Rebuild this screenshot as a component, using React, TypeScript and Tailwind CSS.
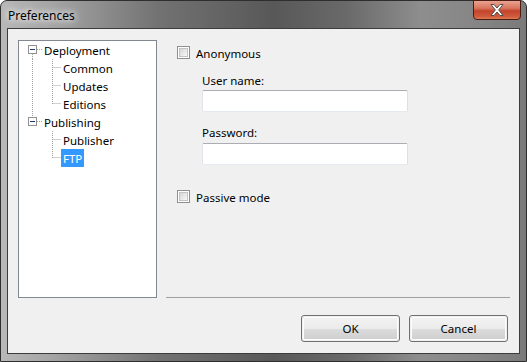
import React from 'react';

type Seg = { x1: number; y1: number; x2: number; y2: number };

const ROOT_X = 13.5;
const CHILD_X = 33.5;

// dotted tree connectors, one svg per row
const Lines = ({ segs, box, width }: { segs: Seg[]; box?: boolean; width: number }) => (
  <svg width={width} height={18} className="shrink-0">
    {segs.map((s, i) => (
      <line
        key={i}
        x1={s.x1}
        y1={s.y1}
        x2={s.x2}
        y2={s.y2}
        stroke="#a0a0a0"
        strokeWidth={1}
        strokeDasharray="1 1"
      />
    ))}
    {box && (
      <g>
        <rect x={9.5} y={4.5} width={8} height={8} fill="#fff" stroke="#919191" />
        <line x1={11} y1={8.5} x2={16} y2={8.5} stroke="#1f3a7a" />
      </g>
    )}
  </svg>
);

const TreeRow = ({
  label,
  segs,
  box,
  child,
  selected,
}: {
  label: string;
  segs: Seg[];
  box?: boolean;
  child?: boolean;
  selected?: boolean;
}) => (
  <div className="flex h-[18px] items-center">
    <Lines segs={segs} box={box} width={child ? 42 : 23} />
    <span
      className={
        'px-[2px] pt-[1px] leading-[17px] ' + (selected ? 'bg-[#3399ff] text-white' : 'text-black')
      }
    >
      {label}
    </span>
  </div>
);

const rootFull: Seg = { x1: ROOT_X, y1: 0, x2: ROOT_X, y2: 18 };
const childFull: Seg = { x1: CHILD_X, y1: 0, x2: CHILD_X, y2: 18 };
const childHalf: Seg = { x1: CHILD_X, y1: 0, x2: CHILD_X, y2: 9 };
const childTick: Seg = { x1: CHILD_X, y1: 8.5, x2: 42, y2: 8.5 };
const rootTick: Seg = { x1: 18, y1: 8.5, x2: 23, y2: 8.5 };

const Checkbox = ({ label }: { label: string }) => (
  <div className="flex h-[13px] items-center">
    <div className="h-[13px] w-[13px] shrink-0 border border-[#8e8f8f] bg-white p-[1px]">
      <div className="h-full w-full border border-[#c3c3c3] bg-gradient-to-br from-[#d6d6d6] to-[#f8f8f8]" />
    </div>
    <span className="ml-[6px] pt-[2px] leading-[16px] text-black">{label}</span>
  </div>
);

const TextBox = () => (
  <div className="h-[22px] w-[206px] rounded-[2px] border border-[#abadb3] border-b-[#e3e9ef] border-l-[#e2e3ea] border-r-[#dbdfe6] bg-white" />
);

const Button = ({ label }: { label: string }) => (
  <div className="h-[27px] w-[99px] rounded-[3px] border border-[#707070] p-[1px]">
    <div className="flex h-full w-full items-center justify-center rounded-[2px] border border-[#fcfcfc] bg-[linear-gradient(to_bottom,#f2f2f2_0%,#ebebeb_50%,#dddddd_51%,#cfcfcf_100%)] text-black">
      {label}
    </div>
  </div>
);

export default function App() {
  return (
    <div className="h-[362px] w-[527px] bg-white font-['Segoe_UI','Noto_Sans',sans-serif] text-[11.5px]">
      <div className="flex h-full w-full flex-col rounded-t-[7px] border border-[#2e2e2e] bg-[linear-gradient(to_right,#b8b8b8_0%,#a4a4a4_10%,#727272_30%,#585858_52%,#6a6a6a_66%,#8e8e8e_80%,#868686_90%,#7a7a7a_100%)] px-[6px] pb-[7px]">
        <div className="relative flex h-[27px] items-center pl-[1px] pt-[2px]">
          <span className="text-[12px] text-black [text-shadow:0_0_6px_#fff,0_0_10px_#fff]">
            Preferences
          </span>
          <div className="absolute right-[-1px] top-[-1px] flex h-[20px] w-[48px] items-center justify-center rounded-b-[4px] border border-[#4a1c14] bg-[linear-gradient(to_bottom,#e8a390_0%,#d8755e_40%,#c4442b_55%,#cf5a3c_85%,#e07a55_100%)]">
            <svg width="16" height="14" viewBox="0 0 16 14">
              <path
                d="M2 1.5 L5 1.5 L8 5 L11 1.5 L14 1.5 L9.7 7 L14 12.5 L11 12.5 L8 9 L5 12.5 L2 12.5 L6.3 7 Z"
                fill="#fff"
                stroke="#4e4e4e"
                strokeWidth="1"
                strokeLinejoin="round"
              />
            </svg>
          </div>
        </div>

        <div className="flex flex-1 flex-col border border-[#3c3c3c] bg-[#f0f0f0]">
          <div className="flex flex-1 pl-[10px] pt-[11px]">
            <div className="h-[258px] w-[139px] border border-[#828790] bg-white">
              <TreeRow
                label="Deployment"
                box
                segs={[{ x1: ROOT_X, y1: 13, x2: ROOT_X, y2: 18 }, rootTick]}
              />
              <TreeRow label="Common" child segs={[rootFull, childFull, childTick]} />
              <TreeRow label="Updates" child segs={[rootFull, childFull, childTick]} />
              <TreeRow label="Editions" child segs={[rootFull, childHalf, childTick]} />
              <TreeRow
                label="Publishing"
                box
                segs={[{ x1: ROOT_X, y1: 0, x2: ROOT_X, y2: 5 }, rootTick]}
              />
              <TreeRow label="Publisher" child segs={[childFull, childTick]} />
              <TreeRow label="FTP" child selected segs={[childHalf, childTick]} />
            </div>

            <div className="ml-[9px] mr-[9px] flex h-[258px] flex-1 flex-col">
              <div className="flex-1 pl-[11px] pt-[6px]">
                <Checkbox label="Anonymous" />
                <div className="pl-[25px]">
                  <div className="mt-[14px] leading-[16px] text-black">User name:</div>
                  <div className="mt-[1px]">
                    <TextBox />
                  </div>
                  <div className="mt-[13px] leading-[16px] text-black">Password:</div>
                  <div className="mt-[2px]">
                    <TextBox />
                  </div>
                </div>
                <div className="mt-[25px]">
                  <Checkbox label="Passive mode" />
                </div>
              </div>
              <div className="h-px bg-[#a0a0a0]" />
            </div>
          </div>

          <div className="flex justify-end gap-[9px] pb-[11px] pr-[11px] pt-[17px]">
            <Button label="OK" />
            <Button label="Cancel" />
          </div>
        </div>
      </div>
    </div>
  );
}
